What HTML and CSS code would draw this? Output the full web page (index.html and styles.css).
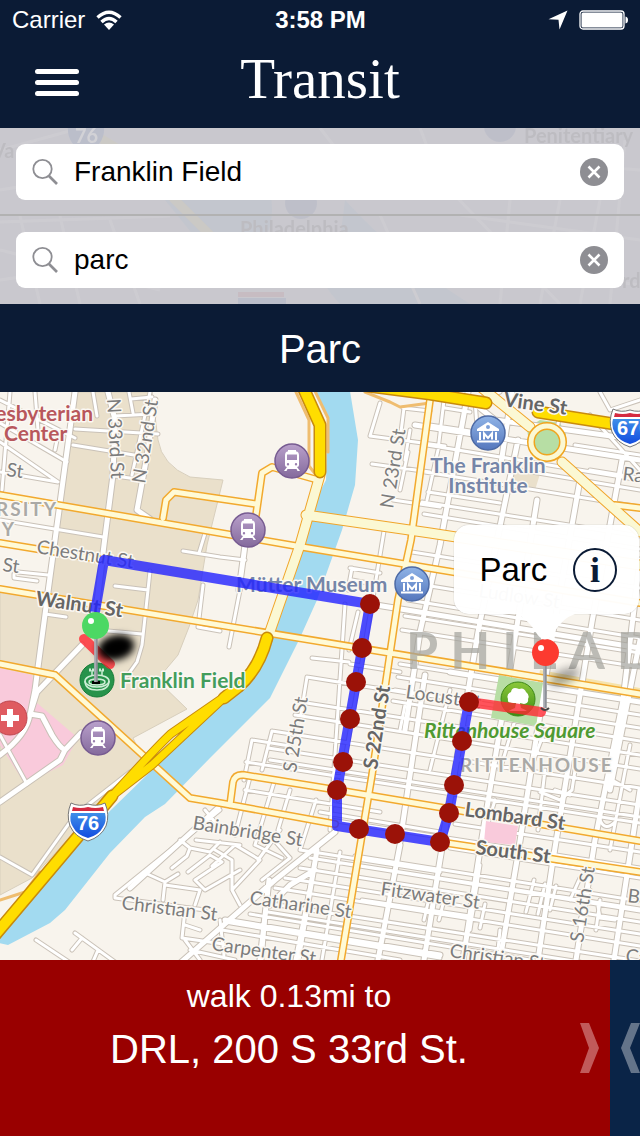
FILE: index.html
```html
<!DOCTYPE html>
<html lang="en">
<head>
<meta charset="utf-8">
<meta name="viewport" content="width=device-width, initial-scale=1">
<title>Transit</title>
<link rel="stylesheet" href="styles.css">
</head>
<body class="app">
<header class="top">
  <div class="status">
    <div class="status-side">
      <span>Carrier</span>
      <svg width="26" height="20" viewBox="0 0 26 20" aria-hidden="true"><g fill="none" stroke="#fff" stroke-width="3.4"><path d="M1.500 7.500Q13-3 24.500 7.500"/><path d="M5.500 12Q13 5 20.500 12"/></g><path fill="#fff" d="M8 14.500Q13 10.500 18 14.500L13 20z"/></svg>
    </div>
    <strong class="clock">3:58 PM</strong>
    <div class="status-side status-right">
      <svg width="20" height="20" viewBox="0 0 20 20" aria-hidden="true"><path fill="#fff" d="M19.500 0.500L11.500 19.500L10.500 9.800L0.500 9.300z"/></svg>
      <svg width="50" height="20" viewBox="0 0 50 20" aria-hidden="true"><rect x="1" y="1" width="44" height="18" rx="3" fill="none" stroke="#fff" stroke-width="1.300"/><rect x="2.500" y="2.500" width="41" height="15" rx="1.500" fill="#fff"/><path fill="#fff" d="M46.500 6.500Q49 7 49 10T46.500 13.500z"/></svg>
    </div>
  </div>
  <div class="nav">
    <button class="menu" type="button" aria-label="Menu"><span class="bar"></span><span class="bar"></span><span class="bar"></span></button>
    <h1 class="title">Transit</h1>
  </div>
</header>

<form class="search">
  <svg class="backdrop" viewBox="0 128 640 176" preserveAspectRatio="xMidYMid slice" aria-hidden="true">
    <path fill="#a9bfce" d="M165 200Q210 130 270 190Q280 240 240 262L215 262zM345 200Q400 260 470 304L340 304Q300 262 340 240z"/>
    <path fill="none" stroke="#d6cf9f" stroke-width="9" d="M95 135L145 165L175 200L215 240L250 285"/>
    <g fill="none" stroke="#e2e0e2" stroke-width="3"><path d="M0 150L110 120M0 190L60 180M0 222L170 216M0 250L160 290M20 216L40 304M60 216L80 304M110 220L140 304M0 280L120 262M420 128L440 180L560 304M380 215L420 304M460 215L640 240M450 260L640 285M560 200L540 304M600 200L580 304M510 200L500 304M625 140L610 304M380 150L640 170M320 128L345 160"/></g>
    <circle cx="301" cy="203" r="16" fill="#8f9bb8"/><circle cx="500" cy="126" r="16" fill="#8f9bb8"/>
    <path fill="#7e93bd" d="M68 125h36q2 20-18 28q-20-8-18-28zM238 298h48v20h-48z"/><path fill="#c08791" d="M238 292h46v5h-46z"/>
    <text class="ghost ghost-light" x="75" y="143">76</text><text class="ghost" x="524" y="143">Penitentiary</text><text class="ghost" x="240" y="236">Philadelphia</text><text class="ghost" x="-8" y="158">Va</text><text class="ghost" x="622" y="288">rd</text>
  </svg>
  <div class="row">
    <label class="field">
      <svg width="28" height="28" viewBox="0 0 28 28" aria-hidden="true"><circle cx="10.500" cy="11" r="9.200" fill="none" stroke="#8e8e93" stroke-width="1.800"/><path d="M17 18L25 26" stroke="#8e8e93" stroke-width="2.600"/></svg>
      <input class="text" type="text" value="Franklin Field" aria-label="From">
      <button class="clear" type="button" aria-label="Clear start"><svg width="28" height="28" viewBox="0 0 28 28"><circle cx="14" cy="14" r="14" fill="#8e8e93"/><path d="M8.500 8.500L19.500 19.500M19.500 8.500L8.500 19.500" stroke="#fff" stroke-width="2.600"/></svg></button>
    </label>
  </div>
  <div class="row">
    <label class="field">
      <svg width="28" height="28" viewBox="0 0 28 28" aria-hidden="true"><circle cx="10.500" cy="11" r="9.200" fill="none" stroke="#8e8e93" stroke-width="1.800"/><path d="M17 18L25 26" stroke="#8e8e93" stroke-width="2.600"/></svg>
      <input class="text" type="text" value="parc" aria-label="To">
      <button class="clear" type="button" aria-label="Clear destination"><svg width="28" height="28" viewBox="0 0 28 28"><circle cx="14" cy="14" r="14" fill="#8e8e93"/><path d="M8.500 8.500L19.500 19.500M19.500 8.500L8.500 19.500" stroke="#fff" stroke-width="2.600"/></svg></button>
    </label>
  </div>
</form>

<h2 class="place">Parc</h2>

<main class="map">
<svg class="canvas" viewBox="0 392 640 568" preserveAspectRatio="xMidYMid slice" role="img" aria-label="Route map of Philadelphia">
  <defs>
    <linearGradient id="purple" x2="0" y2="1"><stop stop-color="#b9a0cb"/><stop offset="1" stop-color="#846a9c"/></linearGradient>
    <linearGradient id="blue" x2="0" y2="1"><stop stop-color="#8fb3e6"/><stop offset="1" stop-color="#5577bd"/></linearGradient>
    <linearGradient id="shieldblue" x2="0" y2="1"><stop stop-color="#3f8fe8"/><stop offset="1" stop-color="#124ce0"/></linearGradient>
    <linearGradient id="leaf" x2="0" y2="1"><stop stop-color="#8cc83b"/><stop offset="1" stop-color="#3d8d14"/></linearGradient>
    <filter id="soft" x="-50%" y="-50%" width="200%" height="200%"><feGaussianBlur stdDeviation="4"/></filter>
    <path id="minor" d="M10 392L2 490M35 392L38 430M0 400L75 438M0 423L67 462M55 450L58 435M0 442L58 482L0 472M93 392L97 416M115 416L152 414M129 392L133 413M131 399L152 397M75 429L158 434M73 445L140 456M115 476L137 479M0 520L103 537M18 572L48 575M14 574L14 578L37 581M150 571L148 590L142 645L137 662L127 676M115 586L148 590M183 551L220 557L245 560M206 530L199 553M203 585L198 627L220 631M45 614L66 617M108 631L142 634M240 590L229 647M0 735L27 784M0 857L32 875L75 815L130 772M150 392L132 475
      M380 403L370 436L445 446M404 408L400 440M403 408L430 411M372 464L430 472M410 430L405 460M408 452L400 490M393 500L440 507M385 525L372 604L338 800M352 568L348 590M350 568L380 573M352 580L378 585M345 604L330 830M358 612L349 650M430 425L470 431M427 445L640 480M425 472L640 507M428 492L500 503M422 502L640 536M424 514L640 549M445 392L438 450L427 500M445 408L470 412M478 440L475 400L500 392M412 552L640 588M412 583L640 620M408 600L640 638M405 616L640 653M402 630L640 667M600 392L610 410L640 400M560 415L552 450M590 415L640 470M575 445L640 455M590 470L640 478M520 470L640 490
      M312 658L349 662M307 677L420 695M307 677L300 720M350 664L400 672M300 702L640 755M295 715L640 769M272 731L640 788M272 731L262 770M268 748L640 805M270 760L640 817M252 740L244 780M252 740L290 746M246 762L640 823M400 664L640 702M398 677L640 715M395 690L640 728M393 701L640 741M450 690L430 770M405 705L400 730M250 777L235 835M275 779L255 845M290 790L278 830M245 790L380 812M320 812L440 832M316 800L300 850M330 820L640 868M300 850L440 872
      M355 856L640 901M335 862L640 911M318 846L295 960M310 858L640 909M300 868L640 922M285 878L640 934M275 888L640 946M265 903L640 961M268 912L580 962M250 914L530 960M225 922L440 958M222 930L400 960M268 890L262 960M340 852L322 960M362 900L470 916M450 790L440 850M455 824L640 852M450 848L640 878M495 800L480 850M515 720L500 770M545 770L538 830M480 865L470 930M534 880L526 912M545 884L538 914M556 886L550 910M580 878L570 900M590 890L580 920M600 900L596 930M500 930L497 960M430 894L424 920M445 896L439 920M475 902L470 925M485 904L480 928M612 780L630 790M600 820Q605 832 615 822M545 730L530 770M575 770L572 790M630 745L610 850M598 906L600 918L615 920M540 792L560 800L572 790M555 790L570 795
      M220 810L115 895L115 898L205 910M143 872L165 882L178 874M165 882L163 900M165 885L200 890L195 905M180 840L190 848L187 856L172 868M190 848L210 852L220 842M205 810L220 828M196 840L240 845M188 872L210 855L222 862L195 880L205 890L240 870M215 850L232 860L232 890L240 905M232 890L260 860L235 845L212 866M272 838L290 858L262 880M258 860L280 830M255 845L282 858M185 910L182 938L230 945M185 925L200 930M36 940L75 966M75 933L115 962M82 938L72 950M98 950L92 964M190 950L235 960M185 940L200 960M220 920L224 955"/>
    <path id="street" d="M75 392L48 592L35 690L30 715M108 392L115 420L113 475L104 545L96 610M155 400L148 450L137 510L150 519M82 645L37 692L30 714Q27 735 0 755M30 714L42 716L52 735Q60 748 65 750L60 760L0 802M65 750L81 733M245 545L239 590M335 832L275 880L170 972M130 888L218 808M270 905L290 885L315 870M468 392L440 545L420 632L405 730M518 440L478 632L440 860L424 960M537 500L516 632L480 850L463 960M580 480L553 632L517 860L500 960M622 460L592 622L553 860L538 960M640 560L623 700L595 840L576 960M640 790L614 960M400 845L378 960M317 850L298 960M269 880L260 960M370 604L640 648M225 920L440 955M450 672L640 702M425 675L400 842M460 392L495 420L640 440M415 425L640 460M640 640L610 790M512 392L500 470"/>
    <path id="avenue" d="M0 495L290 545L640 603M0 543L104 560M0 589L640 694M0 664L55 675L190 798L220 803L335 824M230 805L233 782Q235 774 244 775L337 790L640 841M440 842L640 872M430 400L411 540L398 600L372 775L341 960M256 515L262 473L272 467L318 480M163 518L166 500L174 492L256 504M615 505L640 508"/>
    <path id="drive" d="M320 475L300 545L267 640M306 515L430 533L640 565M482 388L530 427M562 462L640 532"/>
    <path id="freeway" d="M302 385L320 425L320 472M360 385L430 394L486 403M538 412L640 428M267 638Q259 669 238 687L224 698M112 796L60 858L-5 935"/>
    <path id="lanes" d="M227 695L172 733Q165 738 112 796M227 695L152 765L112 796"/>
    <g id="train"><circle r="17" fill="url(#purple)" stroke="#775b91" stroke-width="1.500"/><path fill="#fff" fill-rule="evenodd" d="M-4-11H4V-9.500H5Q7-9 7-6V4Q7 6 5 6L8 10H5.500L4.500 8H-4.500L-5.500 10H-8L-5 6Q-7 6-7 4V-6Q-7-9-5-9.500H-4zM-5-6.500V-1H5V-6.500zM-4 2A1.200 1.200 0 1 0-4 4.400A1.200 1.200 0 1 0-4 2M4 2A1.200 1.200 0 1 0 4 4.400A1.200 1.200 0 1 0 4 2"/></g>
    <g id="museum"><circle r="17" fill="url(#blue)" stroke="#4d6aa5" stroke-width="1.500"/><path fill="#fff" fill-rule="evenodd" d="M0-11L11-4V-2H-11V-4zM0-8A2 2 0 1 0 0-4A2 2 0 1 0 0-8M-9-1H-7V7H-9zM7-1H9V7H7zM-11 7.500H11V9.500H-11z"/><path d="M-4 6.500V0.500L0 5L4 0.500V6.500" fill="none" stroke="#fff" stroke-width="2"/></g>
    <g id="shield"><path d="M-17-18Q-9-14 0-17Q9-14 17-18Q22-6 18 5Q13 16 0 20Q-13 16-18 5Q-22-6-17-18z" fill="#fff" stroke="#777" stroke-width="1"/><path d="M-15-14Q-7-12 0-14Q7-12 15-14L16-10H-16z" fill="#d52a40"/><path d="M-17-8H17Q19 0 15 6Q11 14 0 17Q-11 14-15 6Q-19 0-17-8z" fill="url(#shieldblue)"/></g>
  </defs>
  <rect y="392" width="640" height="568" fill="#f8f4ed"/>
  <path fill="#eae0cb" stroke="#d8cfbd" stroke-width="1" d="M75 392H152L158 440Q162 465 190 477L223 480L207 545L198 600L189 627L178 655L157 680L187 709L133 738L142 757L100 805L32 878L0 895V590L48 592z"/>
  <path fill="#eae0cb" d="M510 467L540 474L535 490L506 485z"/><path fill="#f6e3ab" d="M540 670L640 688V702L538 682z"/>
  <path fill="#f9cadb" d="M0 668L32 675L37 703L78 738L63 765L25 784L0 745z"/>
  <path fill="#a2daf0" d="M310 385H349L358 440L355 485L342 530L317 600L299 640L270 698L210 758L165 804L145 817L110 853L65 910L50 923L8 945L-5 942V930L75 845L190 733L255 675L280 590L308 515L326 480L328 415z"/>
  <path fill="#b7dea4" d="M527 428L540 420L560 423L566 434L560 452L530 452z"/>
  <use href="#minor" class="line minor-edge"/><use href="#street" class="line street-edge"/>
  <use href="#minor" class="line minor-fill"/><use href="#street" class="line street-fill"/>
  <path fill="#b7dea4" d="M499 675L543 683L536 726L491 718z"/><path fill="#f9cadb" d="M486 821L518 826L515 845L484 842z"/>
  <path class="line ramp" d="M296 392L309 420V466L320 480M312 385L328 418V452M365 392L390 402L400 407L430 403M0 900L25 892L40 872M40 885L75 845"/>
  <use href="#avenue" class="line avenue-edge"/><use href="#drive" class="line drive-edge"/>
  <use href="#avenue" class="line avenue-fill"/><use href="#drive" class="line drive-fill"/>
  <circle cx="547" cy="442" r="16" fill="#b7dea4" stroke="#f0a51f" stroke-width="8"/><circle cx="547" cy="442" r="16" fill="none" stroke="#fbf8d3" stroke-width="5"/>
  <use href="#freeway" class="line freeway-edge"/><use href="#lanes" class="line lane-edge"/><use href="#freeway" class="line freeway-fill"/><use href="#lanes" class="line lane-fill"/>

  <g class="label">
    <text class="end hospital" x="93" y="421">Presbyterian</text><text class="hospital" x="4" y="441">Center</text>
    <text transform="translate(107 399) rotate(87)">N 33rd St</text><text transform="translate(145 484) rotate(-81)">N 32nd St</text>
    <text transform="translate(6 476) rotate(7)">St</text><text transform="translate(2 571) rotate(7)">St</text>
    <text class="end district" x="58" y="516">UNIVERSITY</text><text class="end district" x="16" y="536">CITY</text>
    <text transform="translate(36 553) rotate(9)">Chestnut St</text>
    <text class="main" transform="translate(35 605) rotate(8)">Walnut St</text>
    <text class="main" transform="translate(503 406) rotate(8)">Vine St</text>
    <text transform="translate(393 509) rotate(-81)">N 23rd St</text>
    <text transform="translate(622 480) rotate(7)">Race St</text>
    <text transform="translate(478 597) rotate(8)">Ludlow St</text>
    <text class="museum middle" x="488" y="473">The Franklin</text><text class="museum middle" x="488" y="493">Institute</text>
    <text class="museum" x="236" y="592">Mütter Museum</text>
    <text class="city" x="406" y="669">PHILADELPHIA</text>
    <text class="stadium" x="120" y="688">Franklin Field</text>
    <text transform="translate(296 773) rotate(-81)">S 25th St</text><text class="main" transform="translate(377 770) rotate(-81)">S 22nd St</text>
    <text transform="translate(405 698) rotate(8)">Locust St</text>
    <text class="park" x="424" y="738">Rittenhouse Square</text>
    <text class="district" x="460" y="772">RITTENHOUSE</text>
    <text class="main" transform="translate(464 816) rotate(8)">Lombard St</text><text class="main" transform="translate(475 854) rotate(7)">South St</text>
    <text transform="translate(192 829) rotate(9)">Bainbridge St</text><text transform="translate(121 909) rotate(7)">Christian St</text>
    <text transform="translate(249 904) rotate(8)">Catharine St</text><text transform="translate(380 895) rotate(8)">Fitzwater St</text>
    <text transform="translate(211 950) rotate(8)">Carpenter St</text><text transform="translate(449 957) rotate(8)">Christian St</text>
    <text transform="translate(583 943) rotate(-81)">S 16th St</text><text transform="translate(627 902) rotate(7)">Bainbridge</text><text transform="translate(625 962) rotate(7)">Catharine</text>
  </g>
  <use href="#train" x="292" y="461"/><use href="#train" x="248" y="530"/><use href="#train" x="98" y="738"/>
  <use href="#museum" x="488" y="433"/><use href="#museum" x="412" y="584"/>
  <use href="#shield" x="88" y="821"/><text class="route-no middle" x="88" y="830">76</text>
  <use href="#shield" x="630" y="427"/><text class="route-no" x="617" y="435">676</text>
  <circle cx="10" cy="718" r="17" fill="#df5b60" stroke="#bf474f"/><path d="M7 709h6v6h6v6h-6v6h-6v-6h-6v-6h6z" fill="#fff"/>
  <circle cx="518" cy="699" r="17" fill="url(#leaf)" stroke="#3d8818"/><path fill="#fff" d="M516 703L515 708Q512 709 509 711H527Q524 709 521 708L520 703L524 704Q529 703 528 699Q530 695 526 692Q524 687 519 689Q512 686 511 692Q506 694 508 699Q507 703 512 703z"/>
  <circle cx="97" cy="680" r="17" fill="#27934b" stroke="#157b37"/><g fill="none" stroke="#cdeed6" stroke-width="1.500"><ellipse cx="97" cy="681" rx="12" ry="6"/><ellipse cx="97" cy="682" rx="8" ry="3"/><path d="M85 681Q85 690 97 690T109 681M92 675V670M102 675V670"/><path d="M89 670H95M99 670H105" stroke-width="3" stroke-dasharray="2 1"/></g>
  <path class="rideway" d="M95 612L104 560L370 604L337 790V826L440 842L449 813L469 702"/>
  <path class="walkway" d="M469 702L541 712M84 639L110 664"/>
  <g fill="#9b1208"><circle cx="370" cy="604" r="10"/><circle cx="362" cy="648" r="10"/><circle cx="356" cy="682" r="10"/><circle cx="350" cy="719" r="10"/><circle cx="343" cy="762" r="10"/><circle cx="337" cy="790" r="10"/><circle cx="359" cy="829" r="10"/><circle cx="395" cy="834" r="10"/><circle cx="440" cy="842" r="10"/><circle cx="449" cy="813" r="10"/><circle cx="454" cy="785" r="10"/><circle cx="462" cy="741" r="10"/><circle cx="469" cy="702" r="10"/></g>
  <ellipse cx="116" cy="648" rx="18" ry="11" transform="rotate(-15 116 648)" filter="url(#soft)"/><ellipse cx="116" cy="647" rx="15" ry="9" transform="rotate(-12 116 647)" filter="url(#soft)"/>
  <ellipse cx="564" cy="677" rx="16" ry="7" transform="rotate(-25 564 677)" opacity=".35" filter="url(#soft)"/>
  <path d="M92 681h8v3h-8z"/><path d="M541 708Q545 712 549 708" fill="none" stroke="#444" stroke-width="2"/>
  <path d="M96 635V682M545 662V708" stroke="#8d9198" stroke-width="3.500"/><path d="M95 635V682M544 662V708" stroke="#c3c6cb" stroke-width="1"/>
  <circle cx="95.500" cy="625.500" r="13.500" fill="#4cd864"/><circle cx="91" cy="621" r="3" fill="#fff"/>
  <circle cx="545.500" cy="652.500" r="13.500" fill="#fc3a30"/><circle cx="541" cy="648" r="3" fill="#fff"/>
</svg>
<div class="callout">
  <span>Parc</span>
  <button class="info" type="button" aria-label="More about Parc">i</button>
  <svg class="tail" width="60" height="26" viewBox="0 0 60 26" aria-hidden="true"><path fill="#fff" d="M0 0Q12 4 20 17Q30 34 40 17Q48 4 60 0z"/></svg>
</div>
</main>

<section class="steps">
  <article class="step">
    <p class="action">walk 0.13mi to</p>
    <p class="stop">DRL, 200 S 33rd St.</p>
    <button class="turn turn-next" type="button" aria-label="Next step"><svg width="19" height="50" viewBox="0 0 19 50"><path fill="#c15a5a" d="M0 0H9L19 25L9 50H0L9 25z"/></svg></button>
  </article>
  <article class="step step-peek">
    <button class="turn turn-back" type="button" aria-label="Previous step"><svg width="19" height="50" viewBox="0 0 19 50"><path fill="#64748a" d="M19 0H10L0 25L10 50H19L9 25z"/></svg></button>
  </article>
</section>
</body>
</html>
```
FILE: styles.css
```css
* { box-sizing: border-box; }
.app {
  margin: 0;
  min-height: 100vh;
  display: flex;
  flex-direction: column;
  font-family: "Liberation Sans", Arial, sans-serif;
  background: #0b1b35;
  overflow-x: hidden;
}
button { border: 0; padding: 0; background: none; font: inherit; cursor: pointer; }
svg { display: block; }

.top { color: #fff; background: #0b1b35; }
.status {
  display: grid;
  grid-template-columns: 1fr auto 1fr;
  align-items: center;
  height: 40px;
  padding: 0 11px 0 12px;
  font-size: 24px;
}
.status-side { display: flex; align-items: center; gap: 11px; }
.status-right { justify-content: flex-end; }
.nav {
  display: grid;
  grid-template-columns: 1fr auto 1fr;
  align-items: center;
  height: 88px;
  padding: 0 35px 4px;
}
.menu { display: flex; flex-direction: column; gap: 6px; width: 44px; }
.bar { height: 5px; border-radius: 3px; background: #fff; }
.title {
  margin: 0;
  padding-bottom: 6px;
  font: 400 57px/72px "Liberation Serif", serif;
}

.search { position: relative; background: #c9c8ce; }
.backdrop { position: absolute; inset: 0; width: 100%; height: 100%; opacity: .18; }
.ghost { font: 700 20px Lato, sans-serif; fill: #8a8a8a; }
.ghost-light { fill: #fff; }
.row {
  position: relative;
  padding: 16px;
  border-bottom: 2px solid #b2b2b2;
  height: 88px;
}
.row:last-child { border-color: transparent; }
.field {
  display: flex;
  align-items: center;
  gap: 14px;
  height: 56px;
  padding: 0 16px;
  border-radius: 9px;
  background: #fff;
}
.text {
  flex: 1;
  min-width: 0;
  border: 0;
  padding: 0;
  outline: 0;
  background: none;
  color: #000;
  font: 28px/36px "Liberation Sans", Arial, sans-serif;
}
.place {
  margin: 0;
  padding: 2px 0 0;
  color: #fff;
  background: #0b1b35;
  font-size: 40px;
  font-weight: 400;
  line-height: 86px;
  text-align: center;
}

.map { position: relative; flex: 1; min-height: 320px; display: grid; }
.canvas { position: absolute; inset: 0; width: 100%; height: 100%; }
.line { fill: none; stroke-linecap: round; stroke-linejoin: round; }
.minor-edge { stroke: #cac2b8; stroke-width: 5; }
.minor-fill { stroke: #fff; stroke-width: 3; }
.street-edge { stroke: #c8c0b6; stroke-width: 7; }
.street-fill { stroke: #fff; stroke-width: 5; }
.avenue-edge { stroke: #f2a92e; stroke-width: 8; }
.avenue-fill { stroke: #fffad6; stroke-width: 5; }
.drive-edge { stroke: #f0a52a; stroke-width: 11; }
.drive-fill { stroke: #fbf8d3; stroke-width: 9; }
.freeway-edge { stroke: #c88a0c; stroke-width: 13; }
.freeway-fill { stroke: #ffdd00; stroke-width: 10; }
.lane-edge { stroke: #c88a0c; stroke-width: 9; }
.lane-fill { stroke: #ffdd00; stroke-width: 7; }
.ramp { stroke: #efbd70; stroke-width: 3; }
.label {
  font: 400 19px Lato, sans-serif;
  fill: #7c7c7c;
  stroke: #fbf8f3;
  stroke-width: 3px;
  stroke-linejoin: round;
  paint-order: stroke;
}
.end { text-anchor: end; }
.middle { text-anchor: middle; }
.main { font-weight: 700; font-size: 20px; fill: #656565; }
.hospital { font-weight: 700; font-size: 21px; fill: #b8575c; }
.museum { font-weight: 700; font-size: 21px; fill: #7585a8; }
.stadium { font-weight: 700; font-size: 21px; fill: #439d5c; }
.park { font: italic 700 21px Lato, sans-serif; fill: #4f9a32; }
.district { font-weight: 700; letter-spacing: 2px; fill: #aaa9a6; }
.city { font-size: 52px; font-weight: 700; letter-spacing: 12px; fill: #a3a29d; fill-opacity: .7; stroke: none; }
.route-no { font: 700 20px "Liberation Sans", sans-serif; fill: #fff; }
.rideway, .walkway { fill: none; stroke-width: 10; stroke-linejoin: round; stroke-opacity: .8; }
.rideway { stroke: #2020ff; }
.walkway { stroke: #ff2832; stroke-linecap: round; }

.callout {
  position: absolute;
  left: 71%;
  right: 1px;
  top: 133px;
  height: 89px;
  display: flex;
  align-items: center;
  justify-content: space-between;
  padding: 0 22px 0 25px;
  border-radius: 15px;
  background: rgba(255, 255, 255, .97);
  box-shadow: 0 0 1px #999;
  font-size: 33px;
}
.info {
  width: 44px;
  height: 44px;
  border: 2px solid #0b1b35;
  border-radius: 50%;
  color: #0b1b35;
  font: 700 36px/36px "Liberation Serif", serif;
}
.tail { position: absolute; left: 33%; top: 89px; }

.steps { display: flex; min-height: 176px; color: #fff; }
.step {
  position: relative;
  flex: 1;
  padding: 18px 32px 0 0;
  background: #990000;
  text-align: center;
}
.step-peek { flex: 0 0 30px; padding: 0; background: #0a2447; }
.action { margin: 0; font-size: 32px; line-height: 36px; }
.stop { margin: 12px 0 0; font-size: 40px; line-height: 46px; }
.turn { position: absolute; top: 63px; }
.turn-next { right: 11px; }
.turn-back { left: 11px; }
```
